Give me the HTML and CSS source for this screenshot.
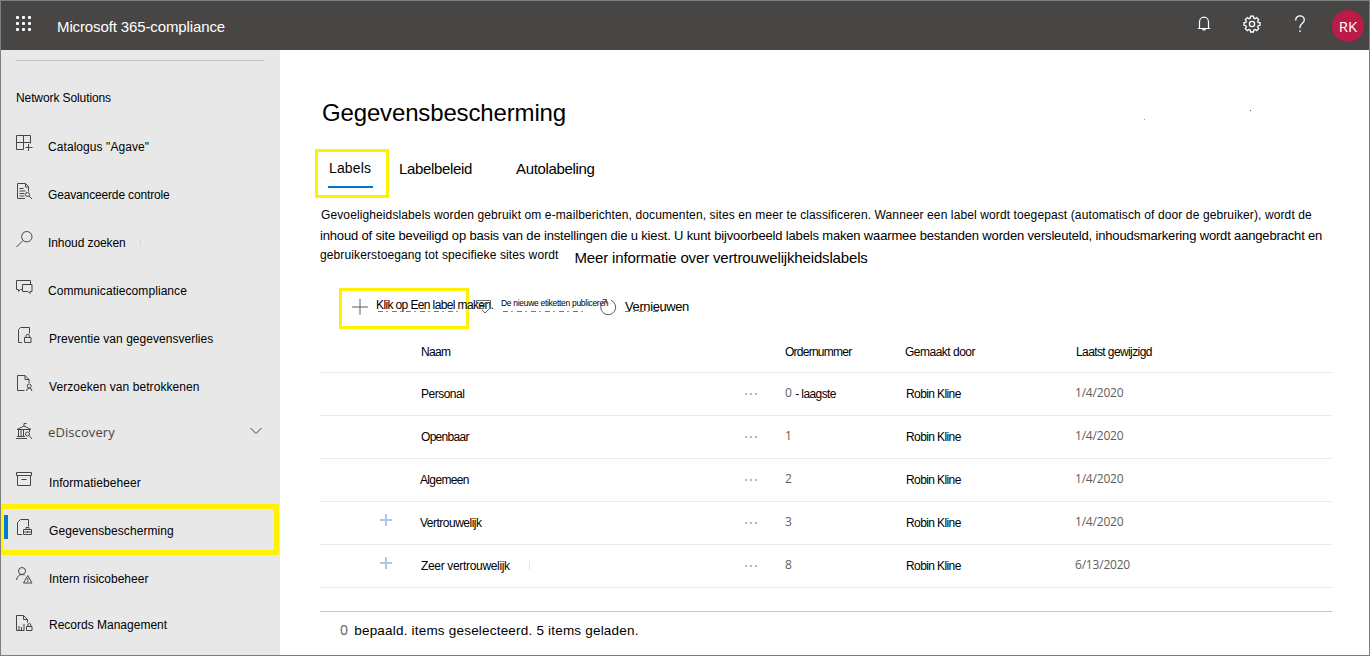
FILE: index.html
```html
<!DOCTYPE html>
<html lang="nl">
<head>
<meta charset="utf-8">
<title>Microsoft 365-compliance</title>
<link rel="stylesheet" href="styles.css">
</head>
<body>
<div class="app">
<header class="topbar">
  <svg class="waffle" width="16" height="16" viewBox="0 0 16 16"><g fill="#fff"><rect x="0" y="0" width="3" height="3" rx="1"/><rect x="6" y="0" width="3" height="3" rx="1"/><rect x="12" y="0" width="3" height="3" rx="1"/><rect x="0" y="6" width="3" height="3" rx="1"/><rect x="6" y="6" width="3" height="3" rx="1"/><rect x="12" y="6" width="3" height="3" rx="1"/><rect x="0" y="12" width="3" height="3" rx="1"/><rect x="6" y="12" width="3" height="3" rx="1"/><rect x="12" y="12" width="3" height="3" rx="1"/></g></svg>
  <div class="brand">Microsoft 365-compliance</div>
  <div class="actions">
    <svg class="bell" width="16" height="16" viewBox="0 0 16 16" fill="none" stroke="#fff" stroke-width="1.2"><path d="M3.500 12.500V6a4.500 4.800 0 0 1 9 0v6.500M1.800 12.500h12.400M6.500 13a1.600 1.600 0 0 0 3 0"/></svg>
    <svg class="gear" width="18" height="18" viewBox="0 0 18 18" fill="none" stroke="#fff" stroke-width="1.3"><path d="M7.600 1.200h2.800l.4 2 1.200.5 1.700-1.100 2 2-1.100 1.700.5 1.200 2 .4v2.400l-2 .4-.5 1.200 1.100 1.700-2 2-1.700-1.100-1.200.5-.4 2H7.600l-.4-2-1.200-.5-1.700 1.100-2-2 1.100-1.700-.5-1.200-2-.4V7.900l2-.4.5-1.200-1.100-1.700 2-2L6 3.700l1.200-.5z"/><circle cx="9" cy="9" r="2.600"/></svg>
    <svg class="help" width="12" height="18" viewBox="0 0 12 18" fill="none" stroke="#fff" stroke-width="1.300"><path d="M1.700 5.500V5a4.300 4.200 0 0 1 8.600 0c0 3.200-4.300 3.800-4.300 7v1.300M6 15.300V17"/></svg>
    <div class="avatar">RK</div>
  </div>
</header>
<div class="body">
  <nav class="sidebar">
    <div class="rule"></div>
    <div class="heading">Network Solutions</div>
    <ul>
      <li><svg viewBox="0 0 17 17"><path d="M.5 .5h14v8M.5 .5v14h7v-14M.5 7.500h14M12.500 9v7M9.500 12.500h7"/></svg><span class="wide">Catalogus "Agave"</span></li>
      <li><svg viewBox="0 0 17 17"><path d="M9 15.500H1.500V.5h8l3 3v5M9.500 .5v3.500h3M3.500 5.500h4M3.500 8h6M3.500 10.500h5M3.500 13h5"/><circle cx="11.500" cy="11.500" r="2"/><path d="M13 13l3 3"/></svg><span class="tight">Geavanceerde controle</span></li>
      <li><svg viewBox="0 0 17 17"><circle cx="10.800" cy="5.700" r="5.200"/><path d="M7 9.500L.5 16"/></svg><span class="snug">Inhoud zoeken</span><i class="mark"></i></li>
      <li><svg viewBox="0 0 17 17"><path d="M6 10.500H4.500L2.500 12.500V10.500H.5V1.500h14v4M6.500 5.500h9.500v7h-2v2l-2-2H6.500z"/></svg><span class="wide">Communicatiecompliance</span></li>
      <li class="in"><svg viewBox="0 0 17 17"><path d="M6 15.500H2.500V2.500l2-2h9v6M8.500 10.500h6.500v5H8.500zM10 10.500V9a1.700 1.700 0 0 1 3.400 0v1.500"/></svg><span class="hair">Preventie van gegevensverlies</span></li>
      <li class="in"><svg viewBox="0 0 17 17"><path d="M8.500 15.500H1.500V.5h7.500l4 4v3.500M9 .5v4h4M10.500 16a2.700 2.700 0 0 1 5.400 0"/><circle cx="13.200" cy="11" r="2"/></svg><span class="wide">Verzoeken van betrokkenen</span></li>
      <li class="disc"><svg viewBox="0 0 17 17"><path d="M1 6.500h14L8 3zM8 3V.5h2.500M2.500 7v6M5 7v6M7.500 7v6M13.500 7v2M1 13.500h8M0 15.500h11"/><circle cx="11.500" cy="11" r="2"/><path d="M13 12.500l3 3.500"/></svg><span>eDiscovery</span><svg class="chev" viewBox="0 0 12 8"><path d="M.5 1l5.500 5.500L11.500 1"/></svg></li>
      <li class="in"><svg viewBox="0 0 17 17"><path d="M.5 1.500h15v3H.5zM1.500 4.500v10h13v-10M5.500 8.500h5"/></svg><span class="wide">Informatiebeheer</span></li>
      <li class="in current"><svg viewBox="0 0 17 17"><path d="M6 15.500H1.500V3.500l3-3h8v7M7.500 10.500h8v5h-8zM7.500 13h8M10 10.500V8.500h3v2M11.500 12v2"/></svg><span class="wide">Gegevensbescherming</span></li>
      <li class="in"><svg viewBox="0 0 17 17"><circle cx="6" cy="4" r="3.500"/><path d="M.5 13c.3-3 2.500-5.500 5.500-5.500 1 0 1.700.2 2.500.7M11.800 8.500l4.200 7.500H7.500zM11.800 11v2.500M11.800 14v1"/></svg><span>Intern risicobeheer</span></li>
      <li class="in last"><svg viewBox="0 0 17 17"><path d="M8.500 15.500H.5V.5h7l4 4v3M7.500 .5v4h4M3 15v-4M5.500 15v-3M8 15V9M10.500 11.500h5.500v4h-5.500zM11.800 11.500V10a1.500 1.500 0 0 1 3 0v1.500"/></svg><span>Records Management</span></li>
    </ul>
  </nav>
  <main>
    <h1>Gegevensbescherming</h1>
    <div class="tabs"><div class="tab selected"><span>Labels</span></div><div class="tab beleid">Labelbeleid</div><div class="tab auto">Autolabeling</div></div>
    <div class="intro">
      <div class="line1">Gevoeligheidslabels worden gebruikt om e-mailberichten, documenten, sites en meer te classificeren. Wanneer een label wordt toegepast (automatisch of door de gebruiker), wordt de</div>
      <div class="line2">inhoud of site beveiligd op basis van de instellingen die u kiest. U kunt bijvoorbeeld labels maken waarmee bestanden worden versleuteld, inhoudsmarkering wordt aangebracht en</div>
      <div class="line3"><span>gebruikerstoegang tot specifieke sites wordt</span><a>Meer informatie over vertrouwelijkheidslabels</a></div>
    </div>
    <div class="toolbar">
      <div class="create"><svg width="17" height="17" viewBox="0 0 17 17"><path d="M9 0v16M1 8h16"/></svg><span class="traced">Klik op Een label maken.</span></div>
      <svg class="publish-icon" width="17" height="15" viewBox="0 0 17 15"><path d="M.5 7V1.500h14V8M3 4.500h9M3 7.500h7M1 9.500h6M6 11l3 3 6-6"/></svg>
      <span class="publish traced">De nieuwe etiketten publiceren</span>
      <svg class="refresh-icon" width="18" height="18" viewBox="0 0 18 18"><path d="M11.800 2.200A7.500 7.500 0 1 1 4.500 3.400M3.500 1.500h4v4M7.500 1.500l-4 4"/></svg>
      <span class="refresh traced">Vernieuwen</span>
    </div>
    <div class="table">
      <div class="row head"><span class="name n2">Naam</span><span class="order">Ordernummer</span><span class="by">Gemaakt door</span><span class="date">Laatst gewijzigd</span></div>
      <div class="row"><span class="plus"></span><span class="name n1">Personal</span><i class="dots"></i><span class="order"><b>0</b> <em>- laagste</em></span><span class="by">Robin Kline</span><span class="date">1/4/2020</span></div>
      <div class="row"><span class="plus"></span><span class="name n2">Openbaar</span><i class="dots"></i><span class="order"><b>1</b></span><span class="by">Robin Kline</span><span class="date">1/4/2020</span></div>
      <div class="row"><span class="plus"></span><span class="name n3">Algemeen</span><i class="dots"></i><span class="order"><b>2</b></span><span class="by">Robin Kline</span><span class="date">1/4/2020</span></div>
      <div class="row"><span class="plus on"></span><span class="name n4">Vertrouwelijk</span><i class="dots"></i><span class="order"><b>3</b></span><span class="by">Robin Kline</span><span class="date">1/4/2020</span></div>
      <div class="row"><span class="plus on"></span><span class="name n5">Zeer vertrouwelijk<i class="mark"></i></span><i class="dots"></i><span class="order"><b>8</b></span><span class="by">Robin Kline</span><span class="date">6/13/2020</span></div>
    </div>
    <div class="status"><b>0</b><span>bepaald. items geselecteerd. 5 items geladen.</span></div>
  </main>
</div>
</div>
</body>
</html>
```
FILE: styles.css
```css
* { box-sizing: border-box; }
body { margin: 0; font: 12px/16px "Liberation Sans", Arial, sans-serif; color: #000; background: #fff; }
.app { width: 1370px; height: 656px; border: 1px solid #7f7f7f; overflow: hidden; display: flex; flex-direction: column; }
svg { display: block; flex: none; }
span, a, .brand, .tab, h1, .intro div { white-space: nowrap; }

.topbar { height: 49px; flex: none; background: #484644; display: flex; color: #fff; padding-left: 15px; }
.waffle { margin-top: 15px; }
.brand { margin: 16px 0 0 25px; font-size: 15px; line-height: 20px; letter-spacing: -0.12px; }
.actions { margin-left: auto; display: flex; padding-right: 5px; }
.bell { margin: 15px 31px 0 0; }
.gear { margin: 14px 33px 0 0; }
.help { margin: 14px 26px 0 0; }
.avatar { width: 32px; height: 32px; border-radius: 50%; background: #ba1b48; margin-top: 9px; text-align: center; font: 15px/33px "Open Sans", sans-serif; }

.body { display: flex; flex: 1; min-height: 0; }
.sidebar { width: 279px; background: #e8e8e8; flex: none; padding: 10px 0 0; }
.rule { height: 1px; background: #bfbfbf; margin: 0 16px 0 15px; }
.heading { margin: 29px 0 21px 15px; letter-spacing: -0.1px; }
.sidebar ul { list-style: none; margin: 0; padding: 0; }
.sidebar li { height: 48px; display: flex; align-items: flex-start; padding: 8px 0 0 15px; }
.sidebar li > svg { width: 17px; height: 17px; fill: none; stroke: #484644; stroke-width: 1; }
.sidebar li > span { margin: 4px 0 0 15px; }
.sidebar li.in > span { margin-left: 16px; }
.wide { letter-spacing: 0.07px; }
.hair { letter-spacing: 0.03px; }
.snug { letter-spacing: -0.08px; }
.tight { letter-spacing: -0.15px; }
.sidebar .mark { width: 1px; height: 7px; margin: 8px 0 0 14px; background: #d8d8d8; }
.sidebar li.disc > span { margin-top: 1px; font: 13px/16px "Open Sans", sans-serif; letter-spacing: 0.1px; color: #484644; }
.sidebar li > .chev { width: 12px; height: 8px; margin: 4px 18px 0 auto; }
.sidebar li.last > span { margin-top: 2px; }
.sidebar li.current { width: 278px; height: 51px; margin: -7px 0 4px; padding: 10px 0 0 13px; border: 5px solid #fff100; border-left-width: 2px; background: linear-gradient(#0078d4, #0078d4) 1px 6px/4px 24px no-repeat; }

main { flex: 1; padding: 46px 36px 0 40px; background: linear-gradient(#555, #555) 970px 60px/1px 1px no-repeat, linear-gradient(#999, #999) 864px 69px/1px 1px no-repeat; }
h1 { margin: 0 0 0 2px; font-size: 24px; font-weight: 400; line-height: 34px; letter-spacing: -0.15px; }
.tabs { display: flex; margin: 19px 0 0 -5px; font-size: 15px; line-height: 20px; letter-spacing: -0.34px; }
.selected { width: 74px; height: 49px; border: 3px solid #fff100; padding: 6px 0 0 10px; font-size: 14px; letter-spacing: 0.15px; }
.selected span { display: block; width: 45px; height: 30px; padding-left: 1px; border-bottom: 2px solid #0078d4; }
.beleid { margin: 10px 0 0 10px; }
.auto { margin: 10px 0 0 44px; }
.intro { margin-top: 9px; height: 63px; }
.line1 { padding-left: 1px; letter-spacing: 0.113px; }
.line2 { font-size: 13px; line-height: 18px; margin-top: 4px; letter-spacing: -0.162px; }
.line3 { display: flex; margin-top: 2px; letter-spacing: 0.115px; }
.line3 a { font-size: 15px; line-height: 20px; margin: 1px 0 0 16px; letter-spacing: -0.155px; }

.toolbar { display: flex; height: 40px; margin: 18px 0 0 19px; }
.create { width: 130px; height: 41px; border: 3px solid #fff100; display: flex; padding: 8px 0 0 9px; }
.create span { margin: -2px 0 0 8px; letter-spacing: -0.62px; }
.create .traced, .publish { height: 18px; }
.traced { background: repeating-linear-gradient(90deg, #777 0 5px, transparent 5px 8px, #999 8px 10px, transparent 10px 14px) 2px 14px/84px 1px no-repeat; }
.toolbar svg { fill: none; stroke: #605e5c; stroke-width: 1; }
.publish-icon { margin: 11px 0 0 7px; }
.publish { font-size: 8.5px; line-height: 12px; margin: 9px 0 0 8px; width: 107px; letter-spacing: -0.3px; }
.refresh-icon { margin: 10px 0 0 -9px; }
.refresh { font-size: 13px; margin: 11px 0 0 8px; letter-spacing: -0.4px; }
.refresh.traced { height: 16px; background-size: 42px 1px; background-position: 0 12px; }

.table { margin-top: 2px; width: 1012px; }
.row { display: grid; grid-template-columns: 101px 324px 40px 121px 169px 1fr; height: 43px; border-bottom: 1px solid #edebe9; padding-top: 14px; }
.row:not(.head) { padding-top: 13px; }
.row > .plus { grid-column: 1; width: 12px; height: 12px; margin: -1px 0 0 60px; }
.plus.on { background: linear-gradient(#a6cbea, #a6cbea) 5px 0/2px 12px no-repeat, linear-gradient(#a6cbea, #a6cbea) 0 5px/12px 2px no-repeat; }
.row > .name { grid-column: 2; }
.n1 { letter-spacing: -0.5px; }
.n2, .n3 { letter-spacing: -0.7px; }
.n3 { letter-spacing: -0.65px; }
.n3, .n4 { margin-left: -1px; }
.n4 { letter-spacing: -0.5px; }
.n5 { letter-spacing: -0.33px; }
.n5 .mark { display: inline-block; width: 1px; height: 9px; margin-left: 19px; background: #e4e4e4; }
.dots { grid-column: 3; width: 12px; height: 2px; margin-top: 7px; background: repeating-linear-gradient(90deg, #bab8b6 0 2px, transparent 2px 5px); }
.row > .order { grid-column: 4; }
.head > .order { letter-spacing: -0.75px; }
.row > .by { grid-column: 5; letter-spacing: -0.6px; }
.head > .by { margin-left: -1px; letter-spacing: -0.5px; }
.row > .date { grid-column: 6; }
.head > .date { margin-left: 1px; letter-spacing: -0.6px; }
.row b, .row:not(.head) .date, .status b { font-family: "Open Sans", sans-serif; font-weight: 400; color: #605e5c; }
em { font-style: normal; letter-spacing: -0.6px; }
.row:not(.head) .date { letter-spacing: -0.2px; margin-top: -1px; }
.row b { position: relative; top: -1px; }
.status { display: flex; width: 1012px; margin-top: 23px; border-top: 1px solid #c8c6c4; padding: 11px 0 0 20px; font-size: 13.5px; letter-spacing: 0.2px; }
.status b { font-size: 14px; margin-top: -1px; }
.status span { margin-left: 6px; }
```
